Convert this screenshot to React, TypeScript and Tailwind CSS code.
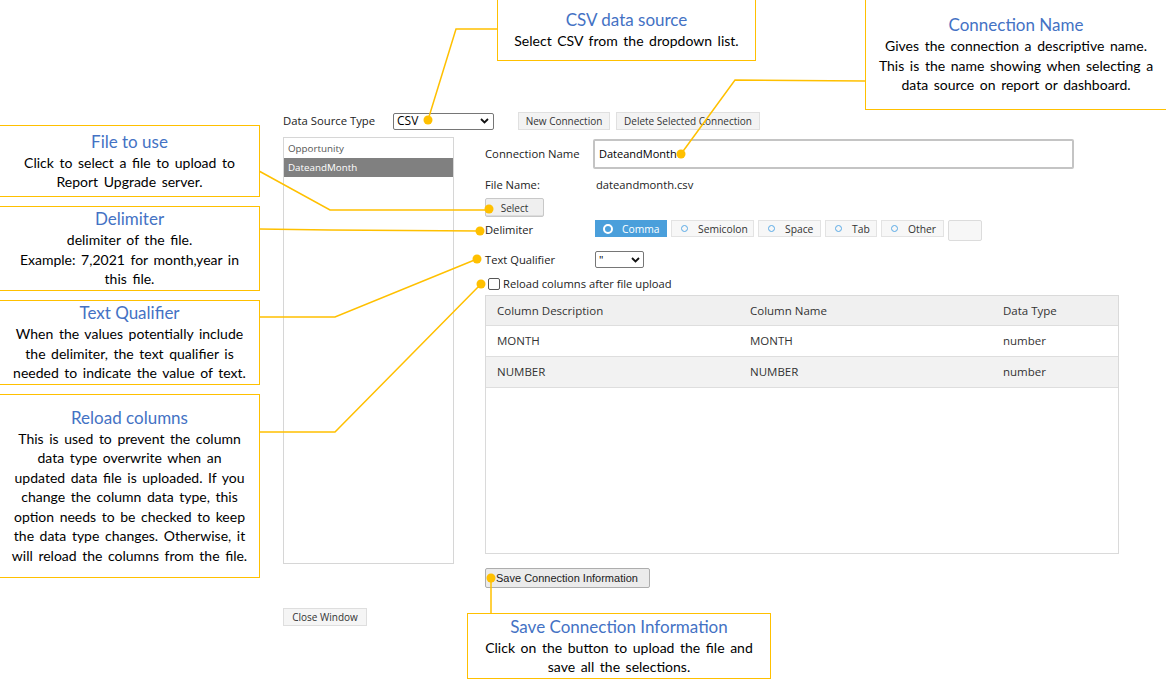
import React from "react";

const GOLD = "#ffc000";

const DELIMITERS = [
  { label: "Comma", w: "w-[72px]", on: true },
  { label: "Semicolon", w: "w-[83px]", on: false },
  { label: "Space", w: "w-[63px]", on: false },
  { label: "Tab", w: "w-[52px]", on: false },
  { label: "Other", w: "w-[63px]", on: false },
];

const COLUMNS = [
  { desc: "MONTH", name: "MONTH", type: "number" },
  { desc: "NUMBER", name: "NUMBER", type: "number" },
];

function Chevron() {
  return (
    <svg width="9" height="6" viewBox="0 0 9 6" className="shrink-0">
      <path d="M1 1l3.5 3.5L8 1" fill="none" stroke="#111" strokeWidth="1.8" />
    </svg>
  );
}

function Callout({ className, title, lines }: { className: string; title: string; lines: string[] }) {
  return (
    <div
      className={
        "absolute flex flex-col items-center justify-center bg-white border border-[#ffc000] text-center font-['Lato','Noto_Sans',sans-serif] " +
        className
      }
    >
      <div className="text-[17px] leading-[22px] text-[#4472c4] whitespace-nowrap">{title}</div>
      {lines.map((l) => (
        <div key={l} className="text-[14px] leading-[19.5px] [word-spacing:2px] text-black whitespace-nowrap">
          {l}
        </div>
      ))}
    </div>
  );
}

function Connectors() {
  const lines = [
    "497,29 456,29 428,120",
    "865,81 735,80 681,154",
    "259,171 330,210 489,210",
    "259,229 330,230 480,231",
    "259,317 335,317 477,259",
    "259,432 335,432 481,284",
    "491,578 491,613",
  ];
  const dots = [
    [428, 120],
    [681, 154],
    [489, 209],
    [480, 231],
    [477, 259],
    [481, 284],
    [491, 578],
  ];
  return (
    <svg className="absolute inset-0 pointer-events-none" width="1166" height="687">
      {lines.map((p) => (
        <polyline key={p} points={p} fill="none" stroke={GOLD} strokeWidth="1.5" />
      ))}
      {dots.map(([x, y]) => (
        <circle key={`${x}-${y}`} cx={x} cy={y} r="4.5" fill={GOLD} />
      ))}
    </svg>
  );
}

export default function App() {
  return (
    <div className="relative w-[1166px] h-[687px] bg-white overflow-hidden font-['Open_Sans','Noto_Sans',sans-serif] text-[11.2px] leading-[16px] text-[#333]">
      <div className="pl-[283px] pt-[112px]">
        {/* top row */}
        <div className="flex items-center">
          <span className="w-[110px] text-[11.3px] text-[#222]">Data Source Type</span>
          <div className="flex items-center justify-between w-[101px] h-[17px] border border-[#767676] rounded-[2px] pl-[3px] pr-[4px] text-[12px] text-black">
            <span>CSV</span>
            <Chevron />
          </div>
          <button className="ml-[24px] h-[18px] w-[92px] bg-[#f3f3f3] border border-[#e0e0e0] text-[10px] text-[#333] whitespace-nowrap">
            New Connection
          </button>
          <button className="ml-[6px] h-[18px] w-[144px] bg-[#f3f3f3] border border-[#e0e0e0] text-[10px] text-[#333] whitespace-nowrap">
            Delete Selected Connection
          </button>
        </div>

        <div className="flex mt-[7px]">
          {/* connection list */}
          <div className="flex flex-col">
            <div className="w-[171px] h-[427px] border border-[#d6d6d6] pt-[2px]">
              <div className="h-[18px] leading-[18px] pl-[4px] text-[#555] text-[9.8px]">Opportunity</div>
              <div className="h-[19px] leading-[19px] pl-[4px] bg-[#808080] text-white text-[9.8px]">DateandMonth</div>
            </div>
            <button className="mt-[44px] w-[84px] h-[18px] bg-[#f5f5f5] border border-[#dedede] text-[10px] text-[#333] whitespace-nowrap">
              Close Window
            </button>
          </div>

          {/* details */}
          <div className="ml-[31px] pt-[2px] flex flex-col items-start">
            <div className="flex items-center">
              <span className="w-[108px] text-[11.3px] text-[#222]">Connection Name</span>
              <div className="w-[481px] h-[30px] border-2 border-[#c4c4c4] rounded-[2px] flex items-center pl-[4px] text-[11px] text-black">
                DateandMonth
              </div>
            </div>

            <div className="flex items-center mt-[8px] h-[16px]">
              <span className="w-[111px] text-[#222]">File Name:</span>
              <span className="text-[#222]">dateandmonth.csv</span>
            </div>

            <button className="mt-[5px] w-[59px] h-[19px] bg-[#efefef] border border-[#c8c8c8] rounded-[2px] shadow-[inset_0_-1px_0_#dcdcdc] text-[10px] text-[#333]">
              Select
            </button>

            <div className="flex items-start mt-[3px]">
              <span className="w-[110px] mt-[2px] text-[#222]">Delimiter</span>
              <div className="flex gap-[4px]">
                {DELIMITERS.map((d) => (
                  <div
                    key={d.label}
                    className={
                      "h-[17px] flex items-center pl-[8px] gap-[7px] text-[10.3px] " +
                      d.w +
                      (d.on
                        ? " bg-[#4a9fdb] text-white"
                        : " bg-[#f7f7f7] border border-[#e3e3e3] text-[#333]")
                    }
                  >
                    {d.on ? (
                      <span className="w-[10px] h-[10px] rounded-full border-2 border-white" />
                    ) : (
                      <span className="w-[7px] h-[7px] ml-[1px] rounded-full border-[1.5px] border-[#5aaae6]" />
                    )}
                    <span className={d.on ? "ml-[2px]" : "ml-[3px]"}>{d.label}</span>
                  </div>
                ))}
                <div className="w-[34px] h-[21px] bg-[#f7f7f7] border border-[#dcdcdc] rounded-[2px]" />
              </div>
            </div>

            <div className="flex items-center mt-[10px]">
              <span className="w-[110px] text-[#222]">Text Qualifier</span>
              <div className="flex items-center justify-between w-[49px] h-[17px] border border-[#767676] rounded-[2px] pl-[3px] pr-[3px] text-[11px] text-black">
                <span className="leading-none">"</span>
                <Chevron />
              </div>
            </div>

            <label className="flex items-center mt-[8px] h-[16px] ml-[3px] text-[#222]">
              <span className="w-[12px] h-[12px] border border-[#555] rounded-[2px] bg-white mr-[3px]" />
              Reload columns after file upload
            </label>

            {/* columns table */}
            <div className="mt-[3px] w-[634px] h-[259px] border border-[#dadada]">
              <div className="grid grid-cols-[253px_253px_1fr] h-[30px] items-center bg-[#f0f0f0] border-b border-[#dedede] pl-[11px] text-[11.5px] text-[#333]">
                <span>Column Description</span>
                <span>Column Name</span>
                <span>Data Type</span>
              </div>
              {COLUMNS.map((c, i) => (
                <div
                  key={c.desc}
                  className={
                    "grid grid-cols-[253px_253px_1fr] h-[31px] items-center border-b border-[#dedede] pl-[11px] text-[11.5px] text-[#333] " +
                    (i % 2 === 1 ? "bg-[#f2f2f2]" : "bg-white")
                  }
                >
                  <span>{c.desc}</span>
                  <span>{c.name}</span>
                  <span>{c.type}</span>
                </div>
              ))}
            </div>

            <button className="mt-[14px] w-[165px] h-[20px] bg-[#ebebeb] border border-[#adadad] rounded-[2px] pl-[10px] text-left whitespace-nowrap font-['Liberation_Sans',Arial,sans-serif] text-[11px] text-[#222]">
              Save Connection Information
            </button>
          </div>
        </div>
      </div>

      <Connectors />

      <Callout
        className="left-[497px] top-0 w-[259px] h-[61px] border-t-0"
        title="CSV data source"
        lines={["Select CSV from the dropdown list."]}
      />
      <Callout
        className="left-[865px] top-0 w-[301px] h-[110px] border-t-0 border-r-0"
        title="Connection Name"
        lines={[
          "Gives the connection a descriptive name.",
          "This is the name showing when selecting a",
          "data source on report or dashboard.",
        ]}
      />
      <Callout
        className="left-0 top-[125px] w-[260px] h-[72px] border-l-0"
        title="File to use"
        lines={["Click to select a file to upload to", "Report Upgrade server."]}
      />
      <Callout
        className="left-0 top-[206px] w-[260px] h-[85px] border-l-0"
        title="Delimiter"
        lines={["delimiter of the file.", "Example: 7,2021 for month,year in", "this file."]}
      />
      <Callout
        className="left-0 top-[300px] w-[260px] h-[85px] border-l-0"
        title="Text Qualifier"
        lines={[
          "When the values potentially include",
          "the delimiter, the text qualifier is",
          "needed to indicate the value of text.",
        ]}
      />
      <Callout
        className="left-0 top-[394px] w-[260px] h-[184px] border-l-0"
        title="Reload columns"
        lines={[
          "This is used to prevent the column",
          "data type overwrite when an",
          "updated data file is uploaded. If you",
          "change the column data type, this",
          "option needs to be checked to keep",
          "the data type changes. Otherwise, it",
          "will reload the columns from the file.",
        ]}
      />
      <Callout
        className="left-[467px] top-[613px] w-[304px] h-[66px]"
        title="Save Connection Information"
        lines={["Click on the button to upload the file and", "save all the selections."]}
      />
    </div>
  );
}
